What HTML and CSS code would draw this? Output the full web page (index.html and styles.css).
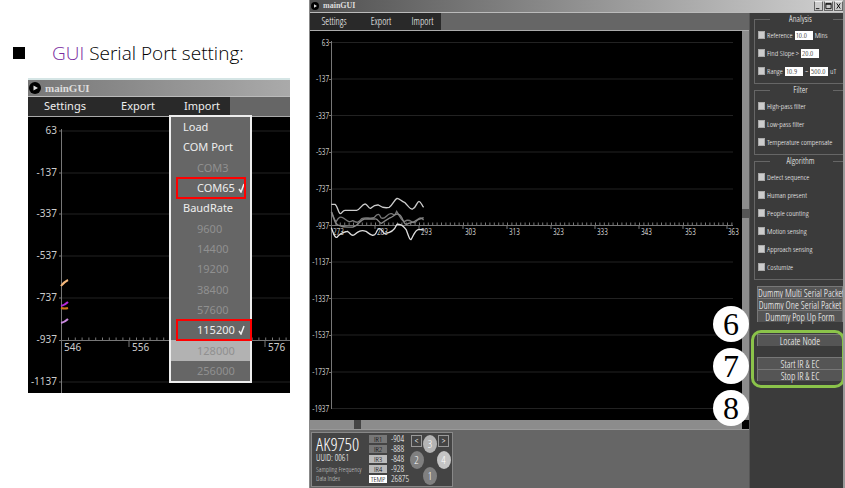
FILE: index.html
```html
<!DOCTYPE html>
<html lang="en">
<head>
<meta charset="utf-8">
<title>GUI Serial Port setting</title>
<link rel="stylesheet" href="styles.css">
</head>
<body>
<main class="slide">
  <section class="intro">
    <h1><span class="bullet"></span><span><em>GUI</em> Serial Port setting:</span></h1>
    <div class="window small">
      <header class="title"><svg class="logo" viewBox="0 0 12 12"><circle cx="6" cy="6" r="6"/><path d="M4.5 3.5L9 6L4.5 8.5Z" fill="#ddd"/></svg>mainGUI</header>
      <nav class="menubar"><div class="tabs"><button>Settings</button><button>Export</button><button>Import</button></div></nav>
      <div class="plot">
        <svg class="chart" role="img" aria-label="Sensor traces">
          <path class="grid" d="M33 14H900M33 56H900M33 97H900M33 139H900M33 181H900M33 265H900"/>
          <path class="axis" d="M33.500 12V276M31 223.500H900M31 14H33M31 56H33M31 97H33M31 139H33M31 181H33M31 265H33M101 223V230M169 223V230M237 223V230"/>
          <path class="ticks wide" d="M40 222H900"/>
          <g class="ylabels"><text x="29" y="17">63</text><text x="29" y="59">-137</text><text x="29" y="100">-337</text><text x="29" y="142">-537</text><text x="29" y="184">-737</text><text x="29" y="226">-937</text><text x="29" y="268">-1137</text></g>
          <g><text x="36" y="234">546</text><text x="104" y="234">556</text><text x="240" y="234">576</text></g>
          <g class="traces"><path stroke="#f5b87c" d="M33 169Q36 165 40 163"/><path stroke="#b428dc" d="M33 189Q37 188 40 185"/><path stroke="#d07818" d="M33 191Q37 192 40 191"/><path stroke="#c98ae0" d="M33 206Q37 205 40 202"/></g>
        </svg>
      </div>
      <div class="popup">
        <button>Load</button><button>COM Port</button><button class="sub off">COM3</button>
        <button class="sub marked com">COM65 <svg class="check" viewBox="0 0 7 10" aria-label="selected"><path d="M1 6L3 9L6 1"/></svg></button><button>BaudRate</button>
        <button class="sub off">9600</button><button class="sub off">14400</button><button class="sub off">19200</button><button class="sub off">38400</button><button class="sub off">57600</button>
        <button class="sub marked baud">115200 <svg class="check" viewBox="0 0 7 10" aria-label="selected"><path d="M1 6L3 9L6 1"/></svg></button><button class="sub off hover">128000</button><button class="sub off">256000</button>
      </div>
    </div>
  </section>

  <section class="window large">
    <header class="title"><svg class="logo" viewBox="0 0 12 12"><circle cx="6" cy="6" r="6"/><path d="M4.500 3.500L9 6L4.500 8.500Z" fill="#ddd"/></svg>mainGUI
      <div class="controls">
        <button aria-label="Minimize"><svg viewBox="0 0 8 8"><path d="M1 7H5"/></svg></button><button aria-label="Maximize"><svg viewBox="0 0 8 8"><path d="M1 1H7V7H1ZM1 2H7"/></svg></button><button aria-label="Close"><svg viewBox="0 0 8 8"><path d="M2 1L6 7M6 1L2 7"/></svg></button>
      </div>
    </header>
    <div class="body">
      <div class="work">
        <nav class="menubar"><div class="tabs"><button>Settings</button><button>Export</button><button>Import</button></div></nav>
        <div class="view">
          <svg class="chart" role="img" aria-label="Infrared readings">
            <path class="grid" d="M21 11.500H423M21 48H423M21 84.500H423M21 121H423M21 158H423M21 231H423M21 267.500H423M21 304H423M21 341H423M21 377.500H423"/>
            <path class="axis" d="M21.500 10V378M19 194.500H423M19 11.500H21M19 48.500H21M19 84.500H21M19 121.500H21M19 158.500H21M19 231.500H21M19 267.500H21M19 304.500H21M19 341.500H21M65 194V198M109 194V198M153 194V198M197 194V198M241 194V198M285 194V198M329 194V198M373 194V198M417 194V198"/>
            <path class="ticks" d="M21 193H423"/>
            <g class="ylabels"><text x="19" y="15">63</text><text x="19" y="51">-137</text><text x="19" y="88">-337</text><text x="19" y="124">-537</text><text x="19" y="161">-737</text><text x="19" y="198">-937</text><text x="19" y="234">-1137</text><text x="19" y="271">-1337</text><text x="19" y="307">-1537</text><text x="19" y="344">-1737</text><text x="19" y="381">-1937</text></g>
            <g><text x="23" y="204">273</text><text x="67" y="204">283</text><text x="111" y="204">293</text><text x="155" y="204">303</text><text x="199" y="204">313</text><text x="243" y="204">323</text><text x="287" y="204">333</text><text x="331" y="204">343</text><text x="375" y="204">353</text><text x="418" y="204">363</text></g>
            <g class="traces readings" transform="translate(-10 139) scale(.3333)">
              <path stroke="#ccc" d="M94 103H105C112 106 115 130 121 131C127 130 127 121 135 121H170C180 120 185 103 195 102C202 101 205 117 212 115C220 108 222 104 235 105C245 112 260 114 268 112C278 104 284 88 291 85C298 84 303 94 315 98C325 108 330 119 338 117C349 113 350 95 357 94C363 94 366 108 371 112"/>
              <path stroke="#777" d="M94 125C98 132 104 155 109 154C116 141 121 139 130 144C144 153 147 159 158 152C171 160 177 158 185 146C200 139 208 149 223 142C234 128 238 132 243 143C255 153 261 128 274 131C283 133 283 142 290 124C299 137 306 157 315 154C330 141 338 167 348 155C355 143 362 140 371 150"/>
              <path stroke="#888" d="M94 125C103 150 107 167 117 166C132 174 148 171 159 171C174 168 181 150 193 147H224C233 143 237 160 245 160C254 152 262 148 269 144C281 141 288 126 297 134C309 137 309 164 320 163C332 157 342 158 349 151L371 143"/>
              <path stroke="#ddd" d="M94 173C99 187 105 207 112 201C121 188 132 187 142 184C152 188 153 202 163 194C175 184 183 179 198 184C209 192 221 203 228 189C236 169 242 174 252 190C267 191 282 184 291 163C301 161 310 167 319 180C326 198 328 210 333 209C341 198 344 179 357 178L371 180"/>
            </g>
          </svg>
          <div class="vscroll"><i></i></div>
        </div>
        <div class="hscroll"><i></i><b></b></div>
        <div class="dock">
          <article class="node">
            <div class="ident"><h2>AK9750</h2><p>UUID: 0061</p><small>Sampling Frequency</small><small>Data Index</small></div>
            <dl><dt class="d1">IR1</dt><dd>-904</dd><dt class="d1">IR2</dt><dd>-888</dd><dt class="d2">IR3</dt><dd>-848</dd><dt class="d2">IR4</dt><dd>-928</dd><dt class="d3">TEMP</dt><dd>26875</dd></dl>
            <div class="pad"><button class="sq prev">&lt;</button><span class="led n3">3</span><button class="sq next">&gt;</button><span class="led n2">2</span><span class="led n4">4</span><span class="led n1">1</span></div>
          </article>
        </div>
      </div>
      <aside class="side">
        <section class="group"><h3>Analysis</h3>
          <div class="row"><input type="checkbox" id="ref"><label for="ref">Reference</label><input type="text" value="10.0" aria-label="Reference minutes"><span>Mins</span></div>
          <div class="row"><input type="checkbox" id="slope"><label for="slope">Find Slope &gt;</label><input type="text" value="20.0" aria-label="Slope"></div>
          <div class="row"><input type="checkbox" id="range"><label for="range">Range</label><input type="text" value="10.9" aria-label="Range from"><span>~</span><input type="text" value="500.0" aria-label="Range to"><span>uT</span></div>
        </section>
        <section class="group"><h3>Filter</h3>
          <div class="row"><input type="checkbox" id="hp"><label for="hp">High-pass filter</label></div>
          <div class="row"><input type="checkbox" id="lp"><label for="lp">Low-pass filter</label></div>
          <div class="row"><input type="checkbox" id="tc"><label for="tc">Temperature compensate</label></div>
        </section>
        <section class="group"><h3>Algorithm</h3>
          <div class="row"><input type="checkbox" id="a1"><label for="a1">Detect sequence</label></div>
          <div class="row"><input type="checkbox" id="a2"><label for="a2">Human present</label></div>
          <div class="row"><input type="checkbox" id="a3"><label for="a3">People counting</label></div>
          <div class="row"><input type="checkbox" id="a4"><label for="a4">Motion sensing</label></div>
          <div class="row"><input type="checkbox" id="a5"><label for="a5">Approach sensing</label></div>
          <div class="row"><input type="checkbox" id="a6"><label for="a6">Costumize</label></div>
        </section>
        <div class="actions"><button>Dummy Multi Serial Packet</button><button>Dummy One Serial Packet</button><button>Dummy Pop Up Form</button></div>
        <div class="actions framed"><button>Locate Node</button><button class="apart">Start IR &amp; EC</button><button>Stop IR &amp; EC</button>
          <div class="callouts"><span>6</span><span>7</span><span>8</span></div>
        </div>
      </aside>
    </div>
  </section>
</main>
</body>
</html>
```
FILE: styles.css
```css
* { box-sizing: border-box; }
body { margin: 0; background: #fff; --narrow: "Open Sans Condensed Light", "Roboto Condensed", "Liberation Sans Narrow", "Open Sans Condensed", "Lato", sans-serif; }
button { margin: 0; padding: 0; border: 0; background: none; color: inherit; font: inherit; white-space: nowrap; }
h1, h2, h3, p, dl, dd { margin: 0; font-weight: inherit; }

.slide { display: grid; grid-template-columns: 309px minmax(0, 1fr); min-height: 100vh; }
.intro { padding: 40px 19px 0 28px; }
.intro h1 { display: flex; align-items: center; gap: 27px; height: 26px; margin: 0 0 12px -15px; font: 19px/26px "Open Sans", sans-serif; font-weight: 300; white-space: nowrap; }
.intro em { color: #7a2ba0; font-style: normal; }
.bullet { width: 12px; height: 12px; background: #000; }

.window { position: relative; color: #eee; }
.title { display: flex; align-items: center; gap: 4px; color: #ddd; font-family: "Liberation Serif", serif; font-weight: 700; }
.logo { width: 12px; height: 12px; }
.menubar { background: #666; border-bottom: 1px solid #aaa; }
.tabs { display: grid; background: #292929; }
.chart { display: block; width: 100%; background: #000; fill: #ccc; }
.grid, .axis, .ticks, .traces { fill: none; }
.grid { stroke: #222; }
.axis { stroke: #777; }
.ticks { stroke: #777; stroke-width: 3; stroke-dasharray: 1 3.4; }
.ticks.wide { stroke-dasharray: 1 5.8; }
.ylabels { text-anchor: end; }
.traces { stroke-width: 2; }
.readings { stroke-width: 4; }

.small { font: 11px/16px "Noto Sans", sans-serif; }
.small .title { height: 19px; padding-left: 1px; font-size: 11px; background: linear-gradient(90deg, #777, #aaa); border-top: 2px solid #d5e5e5; border-bottom: 1px solid #bbb; }
.small .menubar { height: 20px; }
.small .tabs { width: 202px; height: 19px; grid-template-columns: 74px 72px 1fr; font-size: 11px; }
.small .tabs button { padding-bottom: 2px; }
.small .chart { height: 276px; font: 10px "Noto Sans", sans-serif; }
.popup { position: absolute; left: 141px; top: 37px; width: 83px; height: 268px; display: grid; grid-auto-rows: 1fr; background: #666; border: 2px solid #eee; }
.popup button { padding-left: 12px; text-align: left; font-size: 11px; line-height: 16px; }
.popup .sub { padding-left: 26px; }
.popup .off { color: #909090; }
.popup .hover { background: #b2b2b2; }
.popup .marked { position: relative; }
.popup .marked::after { content: ""; position: absolute; inset: -1px 4px -1px 5px; border: 2px solid #f00; }
.popup .baud::after { right: -2px; }
.check { width: 7px; height: 10px; fill: none; stroke: #eee; stroke-width: 1.500; vertical-align: -1px; }

.large { display: flex; flex-direction: column; border-left: 1px solid #888; border-right: 2px solid #999; color: #fff; font: 9px/12px var(--narrow); overflow: hidden; }
.large .title { height: 13px; padding-left: 1px; font-size: 8px; background: linear-gradient(90deg, #505050, #d0d0d0); border-bottom: 1px solid #bbb; }
.large .logo { width: 8px; height: 8px; }
.controls { display: flex; gap: 1px; margin-left: auto; }
.controls button { display: flex; width: 9px; height: 10px; background: #ccc; border: 1px solid #666; border-top-color: #eee; }
.controls svg { width: 7px; fill: none; stroke: #000; }
.body { flex: 1; display: grid; grid-template-columns: minmax(0, 1fr) 94px; }
.work { display: flex; flex-direction: column; background: #888; }
.large .menubar { height: 18px; }
.large .tabs { width: 131px; height: 17px; grid-template-columns: 48px 46px 1fr; font-size: 10px; }
.large .tabs button { padding-bottom: 2px; }
.view { display: grid; grid-template-columns: minmax(0, 1fr) 7px; }
.large .chart { height: 389px; font-size: 9px; fill: #fff; }
.vscroll { background: #8c8c8c; }
.vscroll i { display: block; height: 9px; margin-top: 178px; background: #555; }
.hscroll { display: flex; justify-content: space-between; height: 9px; padding-left: 44px; background: #8c8c8c; }
.hscroll i { width: 7px; background: #444; }
.hscroll b { width: 7px; background: #000; }
.dock { flex: 1; padding: 2px 1px 1px; background: #666; border-top: 1px solid #999; }
.node { display: grid; grid-template-columns: 56px 42px 1fr; width: 142px; height: 55px; padding: 0 1px; background: #444; border: 1px solid #888; }
.ident { display: flex; flex-direction: column; padding: 2px 0 0 3px; white-space: nowrap; }
.ident h2 { font-size: 18px; line-height: 18px; }
.ident p { font-size: 9px; line-height: 9px; }
.ident small { font-size: 7px; line-height: 9px; color: #ccc; }
.ident p + small { margin-top: 3px; }
.node dl { display: grid; grid-template-columns: 18px 20px; grid-auto-rows: 8px; gap: 2px 4px; padding-top: 2px; font-size: 9px; line-height: 8px; }
.node dt { text-align: center; color: #000; font-size: 8px; }
.d1 { background: #777; }
.d2 { background: #bbb; }
.d3 { background: #fff; }
.pad { display: grid; grid-template-columns: 11px 16px 11px; grid-template-rows: repeat(6, 8px); justify-content: end; justify-items: center; padding: 2px 2px 0 0; }
.sq { width: 11px; height: 12px; border: 1px solid #999; line-height: 10px; }
.prev { grid-area: 1 / 1 / 3 / 2; }
.next { grid-area: 1 / 3 / 3 / 4; }
.led { display: grid; place-items: center; width: 14px; height: 18px; border-radius: 50%; background: #808080; font-size: 11px; }
.n3 { grid-area: 1 / 2 / 3 / 3; background: #b4b4b4; }
.n2 { grid-area: 3 / 1 / 5 / 2; }
.n4 { grid-area: 3 / 3 / 5 / 4; background: #c4c4c4; }
.n1 { grid-area: 5 / 2 / 7 / 3; }

.side { padding: 6px 0 0 4px; background: #3b3b3b; border-left: 1px solid #555; }
.group { margin-bottom: 6px; padding: 7px 0 3px 3px; background: linear-gradient(#666, #666) left top / 15px 1px no-repeat, linear-gradient(#666, #666) right top / 10px 1px no-repeat; border-left: 1px solid #666; border-bottom: 1px solid #666; }
.group h3 { height: 5px; margin: -12px 0 5px; padding: 0; text-align: center; font-size: 9px; line-height: 10px; }
.group h3 + .row { margin-top: 7px; }
.row { display: flex; align-items: center; gap: 2px; height: 18px; font-size: 8px; white-space: nowrap; }
.row input { margin: 0; }
.row [type="checkbox"] { appearance: none; flex: none; width: 7px; height: 8px; background: #ccc; border: 1px solid #aaa; }
.row [type="text"] { width: 18px; height: 9px; padding: 0 1px; border: 0; background: #fff; color: #000; font: inherit; }
.actions { display: flex; flex-direction: column; margin-left: 3px; font-size: 10px; }
.actions button { height: 12px; border: 1px solid #777; border-bottom-width: 0; background: #555; line-height: 10px; }
.actions .apart { margin-top: 11px; }
.framed { position: relative; margin-top: 12px; }
.framed::after { content: ""; position: absolute; inset: -4px -2px -7px -6px; border: 3px solid #8bc34a; border-radius: 10px; pointer-events: none; }
.callouts { position: absolute; right: 94px; top: -28px; display: grid; gap: 6px; }
.callouts span { width: 36px; height: 36px; border-radius: 50%; background: #fff; color: #000; text-align: center; font: 32px/36px "Liberation Serif", serif; }
```
